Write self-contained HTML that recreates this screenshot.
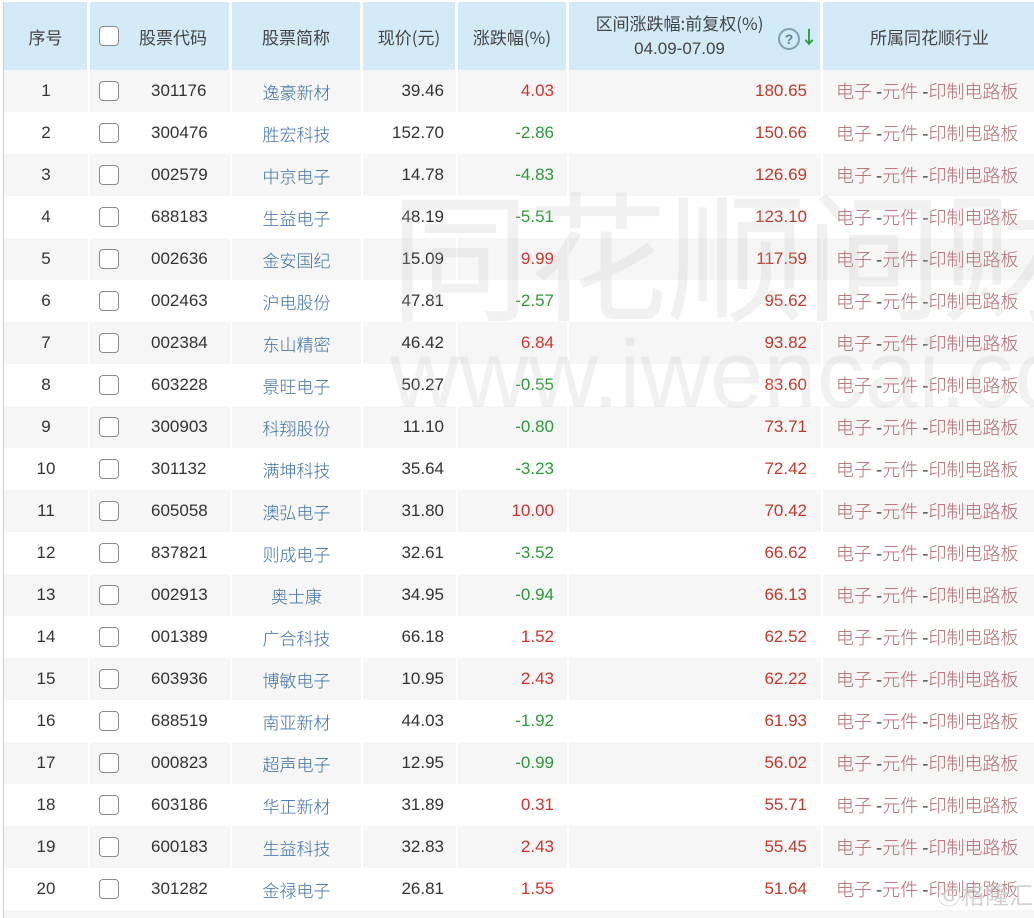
<!DOCTYPE html>
<html><head><meta charset="utf-8"><style>
html,body{margin:0;padding:0;background:#fff;width:1034px;height:918px;overflow:hidden;}
body{font-family:"Liberation Sans","Noto Sans CJK SC",sans-serif;font-size:17px;color:#333;position:relative;}
.row{position:absolute;left:3px;display:flex;border-left:1px solid #cfcfcf;}
.cell{box-sizing:border-box;height:100%;border-right:2px solid #fff;position:relative;white-space:nowrap;display:flex;align-items:center;}
.hd .cell{background:#d3ebf8;border-right:3px solid #fff;color:#444;justify-content:center;font-family:"Noto Sans CJK SC",sans-serif;font-size:17px;}
.o .cell{background:#f6f6f6;}
.e .cell{background:#fff;}
.c{justify-content:center}.r{justify-content:flex-end}
.cb{display:inline-block;width:18px;height:18px;border:1px solid #8a8a8a;border-radius:4px;background:#fff;position:absolute;left:9px;top:11px;}
.hd .cb{top:24px}
.nm{color:#3a6ea5;justify-content:center;font-family:"Noto Sans CJK SC",sans-serif;font-size:17px;font-weight:300}
.up{color:#d2322d}.dn{color:#2b9a3a}
.ind{color:#b46a6e;padding-left:13px;font-family:"Noto Sans CJK SC",sans-serif;font-size:18px;font-weight:300}
.ind b{color:#333;font-weight:normal;margin-left:4px}
.wm{position:absolute;left:390px;color:rgba(190,190,190,0.22);font-family:"Noto Sans CJK SC",sans-serif;pointer-events:none;white-space:nowrap;z-index:5}
</style></head><body>
<div class="row hd" style="top:2px;height:68px">
<div class="cell" style="width:86px">序号</div>
<div class="cell" style="width:142px;justify-content:flex-start;padding-left:49px"><span class="cb"></span>股票代码</div>
<div class="cell" style="width:131px">股票简称</div>
<div class="cell" style="width:95px">现价(元)</div>
<div class="cell" style="width:111px">涨跌幅(%)</div>
<div class="cell" style="width:254px;flex-direction:column;justify-content:center;line-height:26px;padding-right:30px"><div>区间涨跌幅:前复权(%)</div><div style="font-family:'Liberation Sans',sans-serif">04.09-07.09</div><span style="position:absolute;right:2px;top:22px;"><span style="display:inline-block;width:18px;height:18px;border:2px solid #7f9fb8;border-radius:50%;color:#5f7f98;font-size:14px;line-height:18px;font-weight:bold;text-align:center;font-family:'Liberation Sans'">?</span><span style="color:#2b9a3a;font-weight:bold;font-size:18px">↓</span></span></div>
<div class="cell" style="width:216px">所属同花顺行业</div>
</div>
<div id="rows"></div>
<div class="wm" style="top:160px;font-size:140px;letter-spacing:-2px;line-height:180px">同花顺问财</div>
<div class="wm" style="top:320px;font-size:96px;line-height:110px;font-family:'Liberation Sans',sans-serif">www.iwencai.com</div>
<div style="position:absolute;left:937px;top:876px;color:rgba(200,200,200,0.8);font-size:24px;font-family:'Noto Sans CJK SC',sans-serif;z-index:6">Ⓖ格隆汇</div>
<script>
var d=[["301176","逸豪新材","39.46","4.03","180.65"],["300476","胜宏科技","152.70","-2.86","150.66"],["002579","中京电子","14.78","-4.83","126.69"],["688183","生益电子","48.19","-5.51","123.10"],["002636","金安国纪","15.09","9.99","117.59"],["002463","沪电股份","47.81","-2.57","95.62"],["002384","东山精密","46.42","6.84","93.82"],["603228","景旺电子","50.27","-0.55","83.60"],["300903","科翔股份","11.10","-0.80","73.71"],["301132","满坤科技","35.64","-3.23","72.42"],["605058","澳弘电子","31.80","10.00","70.42"],["837821","则成电子","32.61","-3.52","66.62"],["002913","奥士康","34.95","-0.94","66.13"],["001389","广合科技","66.18","1.52","62.52"],["603936","博敏电子","10.95","2.43","62.22"],["688519","南亚新材","44.03","-1.92","61.93"],["000823","超声电子","12.95","-0.99","56.02"],["603186","华正新材","31.89","0.31","55.71"],["600183","生益科技","32.83","2.43","55.45"],["301282","金禄电子","26.81","1.55","51.64"]];
var h='';
d.forEach(function(r,i){var neg=r[3][0]=='-';h+='<div class="row '+(i%2?'e':'o')+'" style="top:'+(70+i*42)+'px;height:42px"><div class="cell c" style="width:86px">'+(i+1)+'</div><div class="cell" style="width:142px;padding-left:61px"><span class="cb"></span>'+r[0]+'</div><div class="cell nm" style="width:131px">'+r[1]+'</div><div class="cell r" style="width:95px;padding-right:12px">'+r[2]+'</div><div class="cell r '+(neg?'dn':'up')+'" style="width:111px;padding-right:13px">'+r[3]+'</div><div class="cell r" style="width:254px;padding-right:14px;color:#c0392b">'+r[4]+'</div><div class="cell ind" style="width:216px">电子<b>-</b>元件<b>-</b>印制电路板</div></div>';});
h+='<div class="row o" style="top:910px;height:10px"><div class="cell" style="width:1040px"></div></div>';
document.getElementById('rows').innerHTML=h;
</script>
</body></html>
